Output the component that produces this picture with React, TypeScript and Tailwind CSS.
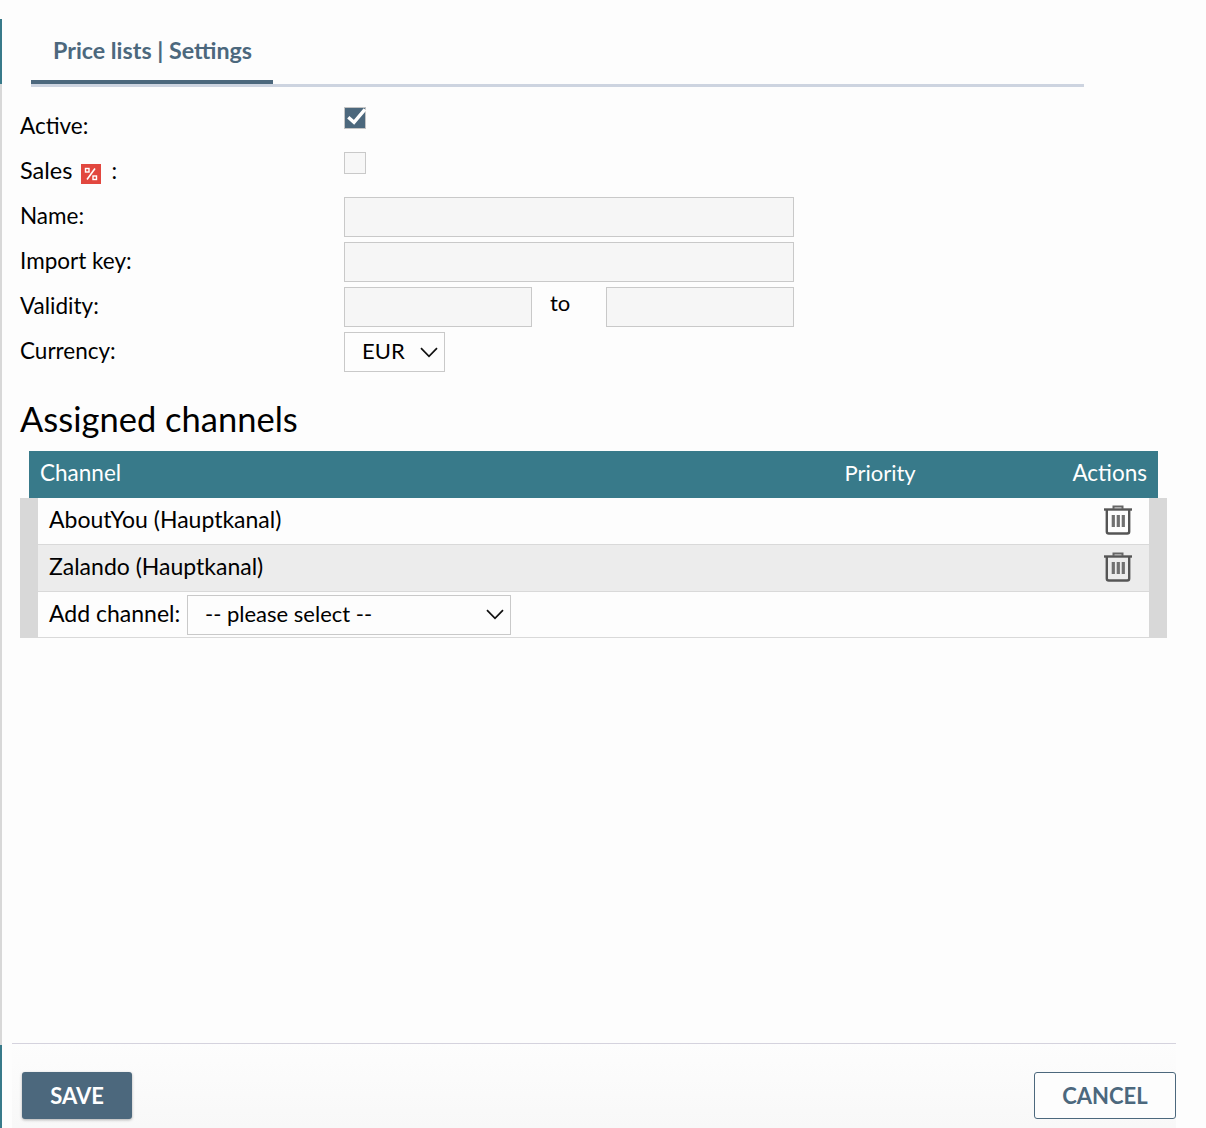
import React from 'react';

const fontStack = 'font-["Lato","Noto_Sans",sans-serif]';

const TrashIcon: React.FC = () => (
  <svg width="28" height="30" viewBox="0 0 28 30" fill="none">
    <path d="M0 4.5h28" stroke="#555" strokeWidth="2.4" />
    <path d="M9.5 4V1.5h9V4" stroke="#666" strokeWidth="2" />
    <path d="M2.8 5v21.5a2 2 0 0 0 2 2h18.4a2 2 0 0 0 2-2V5" stroke="#555" strokeWidth="2.4" />
    <path d="M9.3 10v12M14.3 10v12M19.3 10v12" stroke="#707070" strokeWidth="3.2" />
  </svg>
);

const Chevron: React.FC = () => (
  <svg width="18" height="11" viewBox="0 0 18 11" fill="none" stroke="#111" strokeWidth="1.7">
    <path d="M1 1.2 9 9.4l8-8.2" />
  </svg>
);

const SalesIcon: React.FC = () => (
  <span className="ml-[9px] mr-[10px] mt-[5px] inline-flex h-5 w-5 items-center justify-center bg-[#e2473f]">
    <svg width="14" height="14" viewBox="0 0 14 14" fill="none" stroke="#fff">
      <rect x="1.5" y="1.5" width="3.5" height="3.5" strokeWidth="1.4" />
      <rect x="9" y="9" width="3.5" height="3.5" strokeWidth="1.4" />
      <path d="M11 1.5 3 12.5" strokeWidth="1.6" />
    </svg>
  </span>
);

const Label: React.FC<{ children: React.ReactNode }> = ({ children }) => (
  <div className="flex h-[38px] w-[324px] shrink-0 items-center text-[22.5px] text-black">{children}</div>
);

const TextBox: React.FC<{ width: string }> = ({ width }) => (
  <input className={`h-10 ${width} border border-[#c9c9c9] bg-[#f6f6f6] outline-none`} />
);

const Row: React.FC<{ label: React.ReactNode; children: React.ReactNode }> = ({ label, children }) => (
  <div className="flex h-10 items-start">
    <Label>{label}</Label>
    {children}
  </div>
);

const ChannelRow: React.FC<{ name: string; striped?: boolean }> = ({ name, striped }) => (
  <div className={`flex h-[47px] items-center justify-between border-b border-[#d9d9d9] pb-[3px] pl-[11px] pr-[17px] ${striped ? 'bg-[#ececec]' : 'bg-[#fdfdfd]'}`}>
    <span className="text-[23px] text-black">{name}</span>
    <TrashIcon />
  </div>
);

const App: React.FC = () => {
  return (
    <div className={`flex h-[1128px] w-[1206px] overflow-hidden bg-[#fdfdfd] ${fontStack}`}>
      <div className="flex w-[2px] shrink-0 flex-col">
        <div className="h-[19px] bg-[#fdfdfd]" />
        <div className="h-[65px] bg-[#387a8a]" />
        <div className="h-[961px] bg-[#d8d8d8]" />
        <div className="h-[83px] bg-[#387a8a]" />
      </div>

      <div className="flex min-w-0 flex-1 flex-col">
        <div className="ml-[29px] mt-[33px] w-[1053px] border-b-[3px] border-[#cdd4e0]">
          <div className="h-[51px] w-[242px] border-b-[4px] border-[#4c687d] pl-[22px] text-[23.25px] font-bold leading-[35px] text-[#4c687d]">
            Price lists | Settings
          </div>
        </div>

        <div className="ml-[18px] mt-5 flex flex-col gap-[5px]">
          <Row label="Active:">
            <div className="h-[22px] w-[22px] border border-[#c4c4c4] bg-[#4c687d]">
              <svg className="-m-px overflow-visible" width="22" height="22" viewBox="0 0 22 22" fill="none" stroke="#fff" strokeWidth="3.4">
                <path d="m4.3 10.3 5.7 5 11-13" />
              </svg>
            </div>
          </Row>
          <Row
            label={
              <span className="flex items-center">
                <span className="text-[23.5px]">Sales</span>
                <SalesIcon />:
              </span>
            }
          >
            <div className="h-[22px] w-[22px] border border-[#c9c9c9] bg-[#f7f7f7]" />
          </Row>
          <Row label="Name:">
            <TextBox width="w-[450px]" />
          </Row>
          <Row label="Import key:">
            <TextBox width="w-[450px]" />
          </Row>
          <Row label="Validity:">
            <TextBox width="w-[188px]" />
            <span className="w-[74px] pl-[18px] text-[22px] leading-[32px] text-black">to</span>
            <TextBox width="w-[188px]" />
          </Row>
          <Row label="Currency:">
            <div className="flex h-10 w-[101px] items-center justify-between border border-[#c9c9c9] bg-[#fdfdfd] pl-[17px] pr-[6px] text-[22px] text-black">
              <span className="pb-[3px]">EUR</span>
              <Chevron />
            </div>
          </Row>
        </div>

        <h2 className="ml-[18px] mt-[26px] h-[53px] text-[34.5px] leading-[42px] text-black">Assigned channels</h2>

        <div className="ml-[27px] flex h-[47px] w-[1129px] items-center bg-[#387a8a] pb-[3px] pl-[11px] pr-[11px] text-[22.5px] text-white">
          <span className="flex-1">Channel</span>
          <span className="w-[228px] pb-[2px] text-[22px]">Priority</span>
          <span>Actions</span>
        </div>

        <div className="ml-[18px] w-[1147px] border-x-[18px] border-[#d8d8d8]">
          <ChannelRow name="AboutYou (Hauptkanal)" />
          <ChannelRow name="Zalando (Hauptkanal)" striped />
          <div className="flex h-[46px] items-center border-b border-[#d9d9d9] bg-[#fdfdfd] pl-[11px]">
            <span className="w-[138px] pb-[2px] text-[23px] text-black">Add channel:</span>
            <div className="flex h-10 w-[324px] items-center justify-between border border-[#c9c9c9] pl-[17px] pr-[6px] text-[22px] text-black">
              <span className="pb-[3px]">-- please select --</span>
              <Chevron />
            </div>
          </div>
        </div>

        <div className="mt-auto ml-[10px] w-[1164px] border-t border-[#d5d3de] bg-gradient-to-b from-[#fdfdfd] to-[#f8f8f8]">
          <div className="flex h-[84px] items-start justify-between pl-[10px] pt-[28px]">
            <button className="h-[47px] w-[110px] rounded-[3px] bg-[#4c687d] text-[22px] font-bold text-white shadow-[0_1px_3px_rgba(0,0,0,0.3)]">
              SAVE
            </button>
            <button className="h-[47px] w-[142px] rounded-[3px] border border-[#4c687d] bg-[#fdfdfd] text-[22px] font-bold text-[#4c687d]">
              CANCEL
            </button>
          </div>
        </div>
      </div>
    </div>
  );
};

export default App;
